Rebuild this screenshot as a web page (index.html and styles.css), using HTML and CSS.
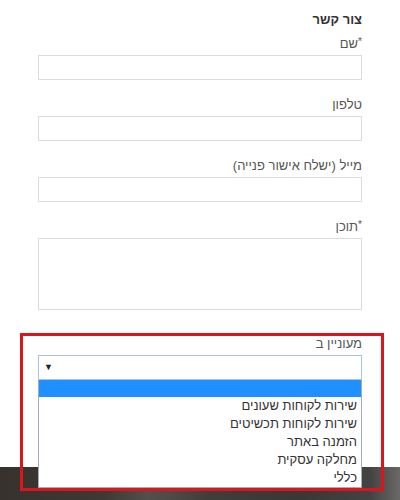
FILE: index.html
```html
<!DOCTYPE html>
<html lang="he" dir="rtl">
<head>
<meta charset="utf-8">
<title>צור קשר</title>
<link rel="stylesheet" href="styles.css">
</head>
<body>
<form class="contact">
  <h2 class="title">צור קשר</h2>
  <div class="field">
    <label class="label"><span class="req">*</span>שם</label>
    <div class="input"></div>
  </div>
  <div class="field">
    <label class="label">טלפון</label>
    <div class="input"></div>
  </div>
  <div class="field">
    <label class="label">מייל (ישלח אישור פנייה)</label>
    <div class="input"></div>
  </div>
  <div class="field field-last">
    <label class="label"><span class="req">*</span>תוכן</label>
    <div class="textarea"></div>
  </div>
  <div class="highlight">
    <label class="label">מעוניין ב</label>
    <div class="select"><span class="arrow">▼</span></div>
    <ul class="listbox">
      <li class="opt opt-active"></li>
      <li class="opt">שירות לקוחות שעונים</li>
      <li class="opt">שירות לקוחות תכשיטים</li>
      <li class="opt">הזמנה באתר</li>
      <li class="opt">מחלקה עסקית</li>
      <li class="opt">כללי</li>
    </ul>
  </div>
</form>
</body>
</html>
```
FILE: styles.css
```css
html, body {
  margin: 0;
  height: 500px;
  overflow: hidden;
}
body {
  direction: rtl;
  font-family: "Liberation Sans", Arial, "DejaVu Sans", sans-serif;
  font-size: 13px;
  color: #555;
  background:
    linear-gradient(100deg, transparent 0, transparent 110px, rgba(255,255,255,0.09) 150px, transparent 210px) 0 467px / 100% 33px no-repeat,
    linear-gradient(to right, #37322e 0, #3b3632 70px, #43403d 170px, #393837 300px, #444343 370px, #6a6967 400px) 0 467px / 100% 33px no-repeat,
    #fff;
}
.contact {
  padding: 12px 38px 0 38px;
}
.title {
  margin: 0 0 8px 0;
  font-size: 13px;
  line-height: 16px;
  font-weight: bold;
  color: #333;
}
.field {
  margin-bottom: 17px;
}
.field-last {
  margin-bottom: 23px;
}
.label {
  display: block;
  line-height: 16px;
  margin-bottom: 3px;
  color: #555;
}
.req {
  font-size: 10px;
  vertical-align: 3px;
  line-height: 0;
}
.input {
  height: 25px;
  box-sizing: border-box;
  border: 1px solid #dcdcdc;
  background: #fff;
}
.textarea {
  height: 72px;
  box-sizing: border-box;
  border: 1px solid #dcdcdc;
  background: #fff;
}
.highlight {
  border: 3px solid #dc141c;
  margin: 0 -22px 0 -18px;
  padding: 0 19px 0 15px;
}
.select {
  height: 25px;
  box-sizing: border-box;
  border: 1px solid #a9c2e2;
  background: #fff;
  display: flex;
  align-items: center;
  justify-content: flex-end;
  padding-left: 5px;
}
.arrow {
  font-size: 9px;
  line-height: 1;
  color: #222;
}
.listbox {
  list-style: none;
  margin: 0;
  padding: 0;
  border: 1px solid #a3adbb;
  border-top: none;
  background: #fff;
}
.opt {
  height: 18px;
  line-height: 18px;
  padding-right: 4px;
  color: #333;
  white-space: nowrap;
}
.opt-active {
  background: #1e90ff;
  height: 17px;
}
```
